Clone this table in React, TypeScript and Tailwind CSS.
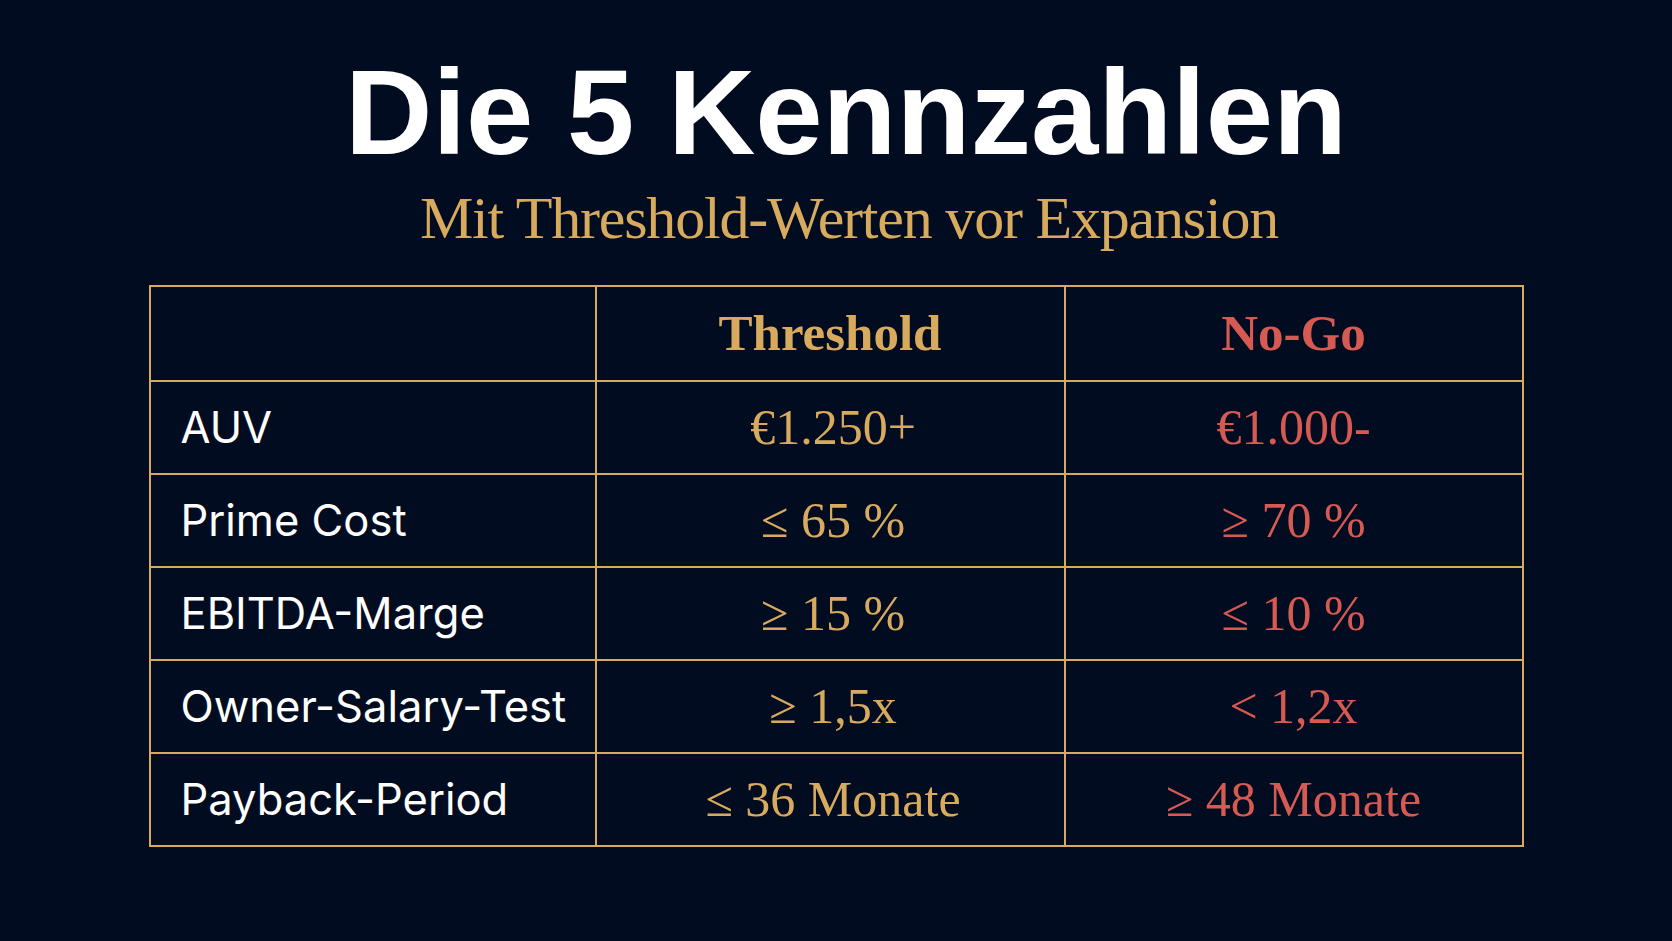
const rows = [
  { label: "AUV", ok: "€1.250+", no: "€1.000-" },
  { label: "Prime Cost", ok: "≤ 65 %", no: "≥ 70 %" },
  { label: "EBITDA-Marge", ok: "≥ 15 %", no: "≤ 10 %" },
  { label: "Owner-Salary-Test", ok: "≥ 1,5x", no: "< 1,2x" },
  { label: "Payback-Period", ok: "≤ 36 Monate", no: "≥ 48 Monate" },
];

export default function App() {
  return (
    <div className="min-h-screen w-full bg-[#020c20] flex flex-col items-center pt-[52px]">
      <h1 className="ml-[20px] text-white font-bold text-[121px] leading-[120px] font-['Liberation_Sans',Arial,sans-serif]">
        Die 5 Kennzahlen
      </h1>
      <p className="ml-[26px] mt-[16px] text-[#d8aa5e] text-[60px] leading-[60px] tracking-[-0.02em] font-['Liberation_Serif','Times_New_Roman',serif]">
        Mit Threshold-Werten vor Expansion
      </p>

      {/* Tabelle */}
      <table className="mt-[37px] border-collapse border-2 border-[#d8aa5e] table-fixed w-[1373px]">
        <colgroup>
          <col className="w-[446px]" />
          <col className="w-[469px]" />
          <col className="w-[458px]" />
        </colgroup>
        <thead>
          <tr className="h-[95px]">
            <th className="border-2 border-[#d8aa5e]"></th>
            <th className="border-2 border-[#d8aa5e] text-[#d8aa5e] font-bold text-[51px] font-['Liberation_Serif',serif]">
              Threshold
            </th>
            <th className="border-2 border-[#d8aa5e] text-[#d65a52] font-bold text-[51px] font-['Liberation_Serif',serif]">
              No-Go
            </th>
          </tr>
        </thead>
        <tbody>
          {rows.map((r) => (
            <tr key={r.label} className="h-[93px]">
              <td className="border-2 border-[#d8aa5e] pl-[30px] text-white text-[43.5px] font-['Inter','Noto_Sans',sans-serif]">
                {r.label}
              </td>
              <td className="border-2 border-[#d8aa5e] pl-[6px] text-center text-[#d8aa5e] text-[50px] font-['Liberation_Serif',serif]">
                {r.ok}
              </td>
              <td className="border-2 border-[#d8aa5e] text-center text-[#d65a52] text-[50px] font-['Liberation_Serif',serif]">
                {r.no}
              </td>
            </tr>
          ))}
        </tbody>
      </table>
    </div>
  );
}
